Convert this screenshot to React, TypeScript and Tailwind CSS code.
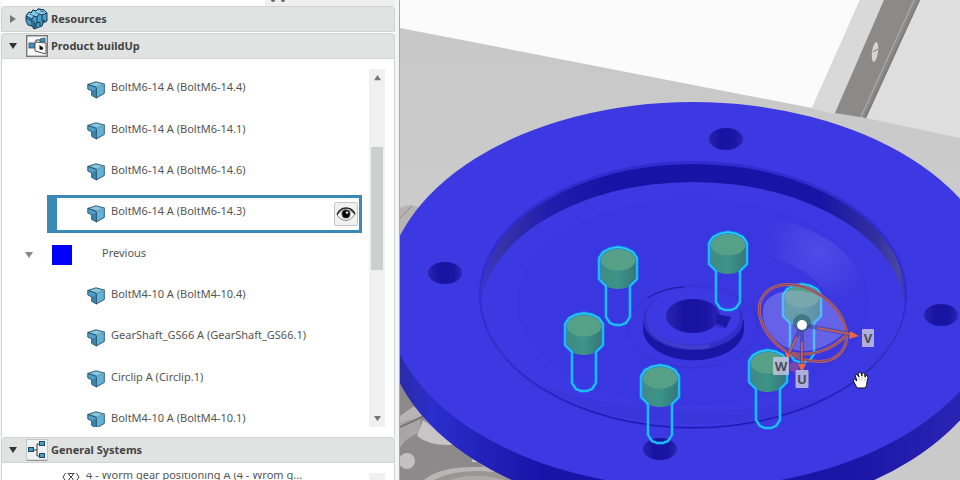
import { useState } from "react";
import clsx from "clsx";

type TreeRow = {
  kind: "part" | "group";
  label: string;
};

const rows: TreeRow[] = [
  { kind: "part", label: "BoltM6-14 A (BoltM6-14.4)" },
  { kind: "part", label: "BoltM6-14 A (BoltM6-14.1)" },
  { kind: "part", label: "BoltM6-14 A (BoltM6-14.6)" },
  { kind: "part", label: "BoltM6-14 A (BoltM6-14.3)" },
  { kind: "group", label: "Previous" },
  { kind: "part", label: "BoltM4-10 A (BoltM4-10.4)" },
  { kind: "part", label: "GearShaft_GS66 A (GearShaft_GS66.1)" },
  { kind: "part", label: "Circlip A (Circlip.1)" },
  { kind: "part", label: "BoltM4-10 A (BoltM4-10.1)" },
];

const bolts = [
  { x: 728, y: 232 },
  { x: 618, y: 247 },
  { x: 584, y: 313 },
  { x: 660, y: 365 },
  { x: 802, y: 284 },
  { x: 768, y: 350 },
];

const holes = [
  { x: 726, y: 139 },
  { x: 445, y: 273 },
  { x: 941, y: 315 },
  { x: 660, y: 449 },
];

function Triangle({ open, className }: { open?: boolean; className: string }) {
  return (
    <svg viewBox="0 0 8 8" className={className} aria-hidden="true">
      <path d={open ? "M0 1H8L4 7Z" : "M1 0L7 4L1 8Z"} fill="currentColor" />
    </svg>
  );
}

function PartIcon() {
  return (
    <svg viewBox="0 0 18 18" className="size-[18px] shrink-0" aria-hidden="true">
      <g stroke="#255069" strokeWidth="0.9" strokeLinejoin="round">
        <path d="M0.8 3.4L9 0.8L17.3 3L9.4 6.4Z" fill="#86c8e4" />
        <path d="M0.8 3.4L9.4 6.4V17L4.6 14.4V9.8L0.8 8Z" fill="#4f9fc8" />
        <path d="M9.4 6.4L17.3 3V12.4L9.4 17Z" fill="#62b1d6" />
      </g>
      <path d="M4.8 9.8L9 8V16.4L4.8 14.2Z" fill="#3a80a8" />
      <path d="M9.4 6.4L17.3 3" stroke="#c8ecf8" strokeWidth="0.6" />
    </svg>
  );
}

function ResourcesIcon() {
  return (
    <svg viewBox="0 0 24 22" className="h-[22px] w-6 shrink-0" aria-hidden="true">
      <g stroke="#143a50" strokeWidth="1" strokeLinejoin="round">
        <path d="M1 8L4 4L6 5L8 2L11 3L13 1L19 2L22 5V13L18 15L17 18L9 21L7 18L3 17L1 13Z" fill="#4aa0ca" />
        <path d="M1 8L4 4L6 5L8 2L11 3L13 1L19 2L22 5L17 7L14 6L12 9L9 8L7 11Z" fill="#86cbe8" />
        <path d="M7 11V18M9 13V21M12 9V15L15 14V18M17 7V13L20 12M1 10L7 13" fill="none" />
      </g>
      <path d="M9 8L5 6M14 6L10 4M19 4L15 3" fill="none" stroke="#143a50" strokeWidth="0.6" />
      <path d="M9 15L12 15V19L9 20.5ZM17 13L20 12V14L17 15.5Z" fill="#235e80" />
    </svg>
  );
}

function ProductIcon() {
  return (
    <svg viewBox="0 0 22 22" className="size-[22px] shrink-0" aria-hidden="true">
      <rect x="0.7" y="0.7" width="20.6" height="20.6" fill="#f7f7f7" stroke="#777" strokeWidth="1.4" />
      <path d="M8 11H10V5H14" fill="none" stroke="#444" />
      <rect x="3" y="8" width="6" height="5" fill="#3f92bd" stroke="#24506a" strokeWidth="0.8" />
      <path d="M14 4L19 3V7L14 7Z" fill="#3f92bd" stroke="#24506a" strokeWidth="0.8" />
      <path d="M9 7L20 8V19L9 16Z" fill="#fbfbfb" stroke="#555" />
      <path d="M13.5 10L17.5 13L16 15L13.5 14.5Z" fill="#111" />
    </svg>
  );
}

function SystemsIcon() {
  return (
    <svg viewBox="0 0 22 22" className="size-[22px] shrink-0" aria-hidden="true">
      <rect x="0.5" y="0.5" width="21" height="21" fill="#eef1f1" stroke="#c4c8c8" />
      <path d="M1 21.3H21" stroke="#888" />
      <path d="M8 11H11V5H14M11 11V17H14" fill="none" stroke="#3b3b3b" />
      <g fill="#4a9cc6" stroke="#1e4a66">
        <rect x="2.5" y="8.5" width="5" height="4" />
        <rect x="13.5" y="2.5" width="5" height="4" />
        <rect x="13.5" y="14.5" width="5" height="4" />
      </g>
    </svg>
  );
}

function EyeIcon() {
  return (
    <svg viewBox="0 0 20 16" className="h-4 w-5" aria-hidden="true">
      <path d="M1 9Q9 -1 19 8Q15 14.5 9 14.5Q4 14 1 9Z" fill="#fff" stroke="#777" strokeWidth="0.9" />
      <path d="M1 8.5Q4 2 10 2Q16 2 19 8" fill="none" stroke="#222" strokeWidth="1.4" />
      <circle cx="10" cy="8" r="4.6" fill="#4b4b4b" />
      <circle cx="10" cy="8" r="3.4" fill="#000" />
      <circle cx="11" cy="6.6" r="1.2" fill="#fff" />
    </svg>
  );
}

function OperationIcon() {
  return (
    <svg viewBox="0 0 18 12" className="h-3 w-[18px] shrink-0" fill="none" stroke="#444" aria-hidden="true">
      <path d="M4 1.5L1 6L4 10.5M14 1.5L17 6L14 10.5" />
      <path d="M5.5 2.5H12.5M5.5 9.5H12.5M7 2.5V4L11 8V9.5M11 2.5V4L7 8V9.5" />
    </svg>
  );
}

type SectionHeaderProps = {
  title: string;
  open: boolean;
  icon: React.ReactNode;
  onToggle: () => void;
};

function SectionHeader({ title, open, icon, onToggle }: SectionHeaderProps) {
  return (
    <button
      type="button"
      aria-expanded={open}
      onClick={onToggle}
      className="flex h-[26px] w-full shrink-0 items-center rounded-t-sm border border-[#d2d4d3] bg-[#e1e3e2] pl-[7px] text-left text-[11px] font-bold text-[#444]"
    >
      <Triangle open={open} className={clsx("mr-2 size-2", open ? "text-[#333]" : "text-[#777]")} />
      <span className="mr-[2px] flex w-6 justify-center">{icon}</span>
      {title}
    </button>
  );
}

function Row({ row, selected, onSelect }: { row: TreeRow; selected: boolean; onSelect: () => void }) {
  if (row.kind === "group") {
    return (
      <li className="flex items-center pl-[23px]">
        <Triangle open className="size-2 text-[#888]" />
        <span className="ml-[19px] size-5 bg-[#0000ff]" />
        <span className="ml-[30px] pb-1">{row.label}</span>
      </li>
    );
  }

  return (
    <li className="flex items-center pr-[7px] pl-[45px]">
      <div
        className={clsx(
          "flex h-[38px] flex-1 items-center border-3 border-l-10 pr-px pl-[30px]",
          selected ? "border-[#3b8ab5]" : "border-transparent"
        )}
      >
        <button type="button" onClick={onSelect} className="flex flex-1 items-center gap-1.5 text-left whitespace-nowrap">
          <PartIcon />
          <span className="pb-1">{row.label}</span>
        </button>
        {selected && (
          <button
            type="button"
            aria-label="Toggle visibility"
            className="flex size-6 items-center justify-center rounded-xs border border-[#c6c6c6] bg-[#f1f1f1]"
          >
            <EyeIcon />
          </button>
        )}
      </div>
    </li>
  );
}

function Scrollbar() {
  return (
    <div className="relative flex w-4 shrink-0 flex-col items-center justify-between bg-[#f0f0f0] py-[5px] text-[#777]">
      <button type="button" aria-label="Scroll up">
        <Triangle open className="size-[7px] rotate-180" />
      </button>
      <span className="absolute inset-x-0.5 top-[78px] h-[123px] bg-[#cdcfce]" />
      <button type="button" aria-label="Scroll down">
        <Triangle open className="size-[7px]" />
      </button>
    </div>
  );
}

function Bolt({ x, y }: { x: number; y: number }) {
  const outline =
    "M-19 11L-15 5L-8 1.5L0 0L8 1.5L15 5L19 11V32L12 39V70L8 76L3 78H-3L-8 76L-12 70V39L-19 32Z";
  return (
    <g transform={`translate(${x} ${y})`}>
      <path d="M-18 12V31Q-14 42 0 42Q14 42 18 31V12Z" fill="url(#boltSide)" />
      <ellipse cx="0" cy="12" rx="18" ry="11.5" fill="#57a088" />
      <path d={outline} fill="none" stroke="#1688f5" strokeWidth="3.5" strokeLinejoin="round" opacity="0.7" />
      <path d={outline} fill="none" stroke="#22d2f5" strokeWidth="1.5" strokeLinejoin="round" />
    </g>
  );
}

function AxisLabel({ x, y, w, children }: { x: number; y: number; w: number; children: string }) {
  return (
    <g>
      <rect x={x - w / 2} y={y - 9} width={w} height="18" rx="1" fill="#c3c3dd" opacity="0.85" />
      <text x={x} y={y + 5} textAnchor="middle" fontSize="13" fontWeight="bold" fill="#4b4b58">
        {children}
      </text>
    </g>
  );
}

function Manipulator() {
  return (
    <g>
      <path d="M764 305C772 286 812 285 833 306C845 319 848 328 843 334C822 353 794 357 777 341C766 331 760 319 764 305Z" fill="#b9b9fa" opacity="0.34" />
      <g fill="none">
        <ellipse cx="803" cy="323" rx="48" ry="33" transform="rotate(35 803 323)" stroke="#b8605f" strokeWidth="3" />
        <ellipse cx="803" cy="323" rx="48" ry="33" transform="rotate(35 803 323)" stroke="#7a4a78" strokeWidth="1" />
        <path d="M847 334C833 351 808 357 791 353" stroke="#b8605f" strokeWidth="3" />
        <path d="M847 334C833 351 808 357 791 353" stroke="#7a4a78" strokeWidth="1" />
        <path d="M803 325L850 334M802 325V365M802 325L789 353" stroke="#3a2f8e" strokeWidth="4" opacity="0.5" />
        <path d="M817 328L850 334M802 342V365M797 337L789 353" stroke="#b8605f" strokeWidth="2" />
      </g>
      <circle cx="794" cy="367" r="5" fill="#a85088" opacity="0.6" />
      <path d="M850 331L859 336L849 339ZM798 364H806L802 372ZM785 352L791 355L787 359Z" fill="#e8683c" />
      <circle cx="802" cy="323" r="9" fill="#2b5d70" opacity="0.6" />
      <circle cx="802" cy="325" r="5" fill="#fff" />
      <AxisLabel x={868} y={338} w={12}>V</AxisLabel>
      <AxisLabel x={802} y={379} w={13}>U</AxisLabel>
      <AxisLabel x={781} y={366} w={16}>W</AxisLabel>
    </g>
  );
}

function Viewport() {
  return (
    <svg
      viewBox="400 0 560 480"
      preserveAspectRatio="xMinYMin slice"
      className="block h-full w-full"
      role="img"
      aria-label="3D view"
    >
      <defs>
        <linearGradient id="boltSide">
          <stop offset="0" stopColor="#428a80" />
          <stop offset="0.5" stopColor="#3b9488" />
          <stop offset="1" stopColor="#36777a" />
        </linearGradient>
        <linearGradient id="rim" gradientUnits="userSpaceOnUse" x1="400" y1="0" x2="960" y2="0">
          <stop offset="0" stopColor="#2b2ba8" />
          <stop offset="0.06" stopColor="#2b2ecb" />
          <stop offset="0.25" stopColor="#1814a8" />
          <stop offset="0.8" stopColor="#1a15a5" />
          <stop offset="1" stopColor="#2a24b4" />
        </linearGradient>
        <linearGradient id="wall" gradientUnits="userSpaceOnUse" x1="479" y1="0" x2="907" y2="0">
          <stop offset="0" stopColor="#3b36d2" />
          <stop offset="0.05" stopColor="#3733a8" />
          <stop offset="0.16" stopColor="#221dac" />
          <stop offset="0.3" stopColor="#1713a6" />
          <stop offset="0.8" stopColor="#1814a6" />
          <stop offset="0.93" stopColor="#3330a0" />
          <stop offset="0.98" stopColor="#4a489f" />
          <stop offset="1" stopColor="#302bc8" />
        </linearGradient>
        <linearGradient id="bore">
          <stop offset="0" stopColor="#2923b0" />
          <stop offset="0.35" stopColor="#17129f" />
          <stop offset="0.75" stopColor="#1a15a2" />
          <stop offset="1" stopColor="#2c26b8" />
        </linearGradient>
        <radialGradient id="sheen" gradientUnits="userSpaceOnUse" cx="818" cy="252" r="62">
          <stop offset="0" stopColor="#4f4ce8" />
          <stop offset="0.5" stopColor="#4845e5" stopOpacity="0.7" />
          <stop offset="1" stopColor="#3c39e2" stopOpacity="0" />
        </radialGradient>
        <linearGradient id="ground" x1="0" y1="0" x2="0" y2="1">
          <stop offset="0" stopColor="#c7c7c7" />
          <stop offset="0.5" stopColor="#cccccc" />
          <stop offset="1" stopColor="#cacaca" />
        </linearGradient>
        <clipPath id="pocket">
          <ellipse cx="693" cy="295" rx="212" ry="132" />
        </clipPath>
      </defs>

      {/* floor, wall and rail behind the part */}
      <rect x="400" y="0" width="560" height="480" fill="url(#ground)" />
      <path d="M400 0H860L812 108L400 28Z" fill="#fbfbfb" />
      <path d="M860 0H884L835 114L812 109Z" fill="#d9d9d9" />
      <path d="M917 0H960V138L866 118Z" fill="#dedede" />
      <path d="M884 0H920L866 118L835 113Z" fill="#8b8a88" />
      <path d="M914 0L861 117" stroke="#b5b4b2" strokeWidth="1" />
      <path d="M919 0L865 118" stroke="#7f7e7c" strokeWidth="2" />
      <ellipse cx="875" cy="52" rx="3" ry="10" transform="rotate(8 875 52)" fill="#d4d4d2" />
      <path d="M873 52L878 49" stroke="#777" />

      {/* machine base */}
      <path d="M400 208Q408 202 420 208L400 240Z" fill="#b9b3b4" />
      <path d="M400 218L412 206" stroke="#8f898a" />
      <path d="M400 365L520 480H400Z" fill="#8c8a8a" />
      <path d="M400 416Q414 406 424 400L520 480H500L440 431H424Q402 434 400 442Z" fill="#b8b3b4" />
      <path d="M400 426Q410 418 424 418Q430 430 450 440L480 466H400Z" fill="#8c8a8a" />
      <path d="M400 423Q410 418 421 419L419 433Q405 438 400 448Z" fill="#aaa5a6" />
      <path d="M400 427L424 416" stroke="#777" strokeWidth="2" />
      <path d="M417 436L423 420Q434 430 450 434L462 444Q432 448 417 436Z" fill="#c9c4c5" />
      <circle cx="407" cy="461" r="8" fill="#c4bfc0" />
      <path d="M473 457H479L482 462H472Z" fill="#cfcaca" />
      <path d="M424 480Q440 466 480 467H502L518 480Z" fill="#bab6b6" />
      <path d="M434 480Q450 471 480 471L508 473L516 480Z" fill="#999696" />
      <path d="M450 480Q464 475 484 476L506 480Z" fill="#b0a9a9" />

      {/* flange */}
      <path d="M385 295V324A308 193 0 0 0 1001 324V295Z" fill="url(#rim)" />
      <ellipse cx="693" cy="295" rx="308" ry="193" fill="#3c39e2" />
      <ellipse cx="693" cy="295" rx="214" ry="134" fill="#302cd0" />
      <ellipse cx="693" cy="296" rx="212" ry="132" fill="url(#wall)" />
      <g clipPath="url(#pocket)">
        <ellipse cx="693" cy="315" rx="213" ry="133" fill="#3c39e2" />
        <ellipse cx="693" cy="302" rx="176" ry="104" fill="#3835dc" opacity="0.35" />
        <path d="M752 214Q800 220 836 245Q866 270 870 302L836 312Q832 295 815 280Q797 264 768 256Z" fill="url(#sheen)" />
        <ellipse cx="693" cy="322" rx="132" ry="80" fill="#3936df" opacity="0.5" />
        <path d="M506 370Q580 424 700 424Q810 422 868 378Q818 411 700 411Q590 410 506 370Z" fill="#3531d2" opacity="0.35" />
      </g>

      {holes.map((hole) => (
        <ellipse key={hole.x} cx={hole.x} cy={hole.y} rx="17" ry="11" fill="url(#bore)" />
      ))}

      {/* hub */}
      <ellipse cx="693" cy="327" rx="65" ry="41" fill="none" stroke="#302cc4" strokeWidth="0.8" opacity="0.7" />
      <path d="M648 298Q662 288 684 287" fill="none" stroke="#1c1899" />
      <path d="M643 320V329A50 31 0 0 0 744 329V320Z" fill="#1915a5" />
      <ellipse cx="693" cy="320" rx="50" ry="30" fill="#322fc9" />
      <path d="M649 330A50 30 0 0 0 710 348L708 344A47 28 0 0 1 647 322Z" fill="#4b49cf" opacity="0.6" />
      <ellipse cx="693" cy="317" rx="47" ry="28" fill="#3c39e2" />
      <ellipse cx="693" cy="316" rx="27" ry="17" fill="url(#bore)" />
      <path d="M717 314L731 317L726 328L716 325Z" fill="#1c17a4" />
      <path d="M717 323L726 328L716 327Z" fill="#302cc8" />

      {bolts.map((bolt) => (
        <Bolt key={bolt.x} x={bolt.x} y={bolt.y} />
      ))}

      <Manipulator />

      {/* pan cursor */}
      <path
        d="M857 388Q854 382 853 380Q854 378 857 381L855 375Q857 373 859 377L858 373Q861 371 862 376V373Q865 372 865 377L867 375Q869 377 867 382Q867 386 865 388Z"
        fill="#fff"
        stroke="#111"
        strokeWidth="1"
        strokeLinejoin="round"
      />
      <path d="M859 377L860 381M862 376V380M865 377V381" stroke="#999" strokeWidth="0.6" />
    </svg>
  );
}

export default function App() {
  const [selected, setSelected] = useState(3);
  const [open, setOpen] = useState({ resources: false, product: true, systems: true });

  return (
    <div className="flex h-screen overflow-hidden bg-white font-['Noto_Sans',sans-serif] text-[11px] text-[#555]">
      <aside className="flex w-[400px] shrink-0 flex-col border-r border-[#aaa] bg-[#f4f5f5] pr-1 pl-px">
        <div className="flex h-1.5 shrink-0 bg-white">
          <div className="ml-auto flex w-[130px] gap-1.5 bg-[#efefef] pl-1.5">
            <span className="h-0.5 w-1 rounded-b-full bg-[#666]" />
            <span className="h-0.5 w-1 rounded-b-full bg-[#666]" />
          </div>
        </div>

        <SectionHeader
          title="Resources"
          icon={<ResourcesIcon />}
          open={open.resources}
          onToggle={() => setOpen({ ...open, resources: !open.resources })}
        />
        <div className="h-px shrink-0 bg-white" />
        <SectionHeader
          title="Product buildUp"
          icon={<ProductIcon />}
          open={open.product}
          onToggle={() => setOpen({ ...open, product: !open.product })}
        />
        {open.product && (
          <div className="border-x border-[#d2d4d3] bg-white py-[10px]">
            <div className="flex h-[358px] overflow-hidden pr-[9px]">
              <ul className="grid h-[372px] min-w-0 flex-1 grid-rows-9">
                {rows.map((row, i) => (
                  <Row key={row.label} row={row} selected={i === selected} onSelect={() => setSelected(i)} />
                ))}
              </ul>
              <Scrollbar />
            </div>
          </div>
        )}
        <SectionHeader
          title="General Systems"
          icon={<SystemsIcon />}
          open={open.systems}
          onToggle={() => setOpen({ ...open, systems: !open.systems })}
        />
        {open.systems && (
          <div className="min-h-0 flex-1 border-x border-[#d2d4d3] bg-white pt-[10px] pr-[9px]">
            <div className="flex h-full items-start overflow-hidden">
              <div className="flex h-2 flex-1 items-center gap-1.5 pl-[60px]">
                <OperationIcon />
                <span className="pb-1">4 - Worm gear positioning A (4 - Wrom g...</span>
              </div>
              <div className="h-full w-4 bg-[#f0f0f0]" />
            </div>
          </div>
        )}
      </aside>

      <main className="min-w-0 flex-1 overflow-hidden">
        <Viewport />
      </main>
    </div>
  );
}
